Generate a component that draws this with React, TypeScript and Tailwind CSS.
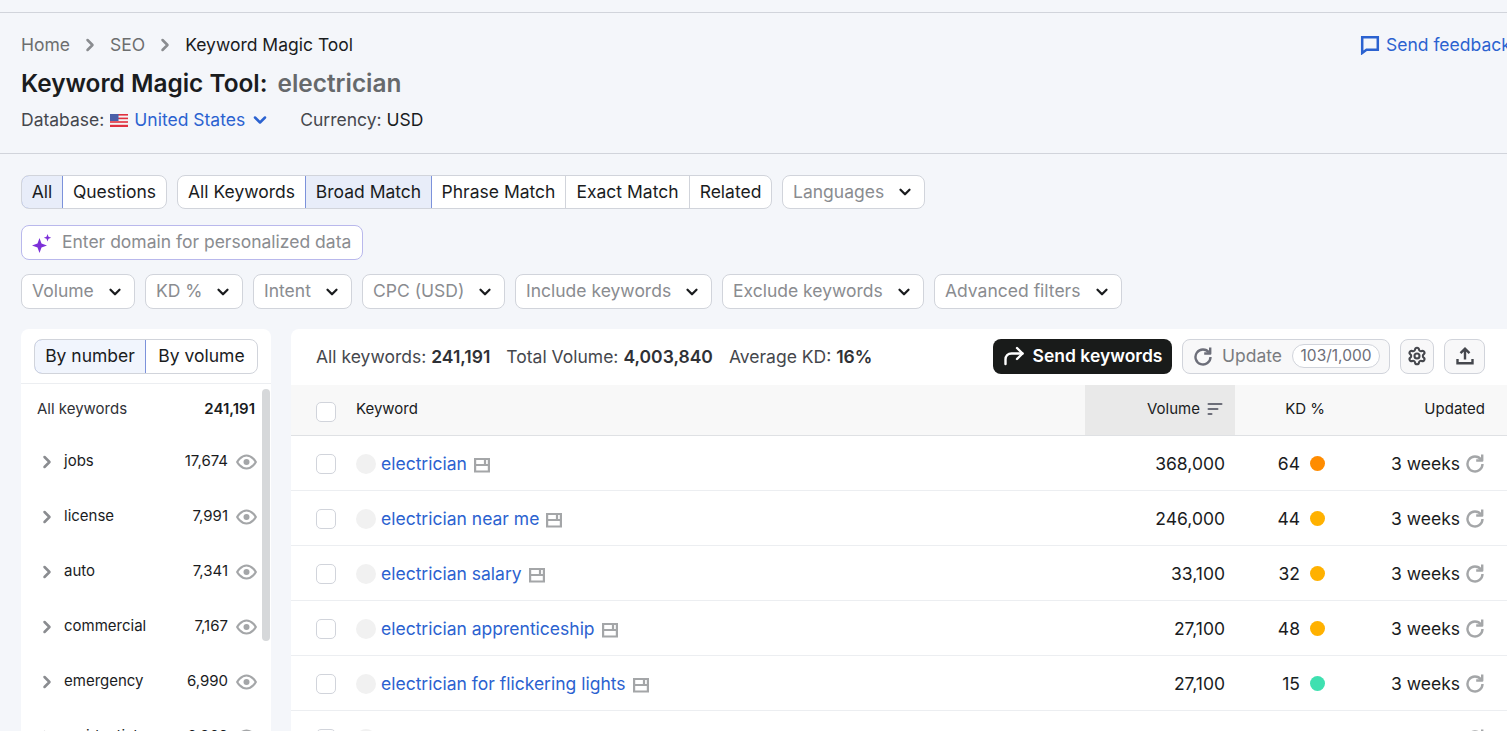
import { ChevronRight, ChevronDown, Settings } from 'lucide-react';

const filters = [
    { label: 'Volume', width: 'w-[114px]' },
    { label: 'KD %', width: 'w-[98px]' },
    { label: 'Intent', width: 'w-[99px]' },
    { label: 'CPC (USD)', width: 'w-[143px]' },
    { label: 'Include keywords', width: 'w-[197px]' },
    { label: 'Exclude keywords', width: 'w-[202px]' },
    { label: 'Advanced filters', width: 'w-[188px]' },
];

const groups = [
    { name: 'jobs', count: '17,674' },
    { name: 'license', count: '7,991' },
    { name: 'auto', count: '7,341' },
    { name: 'commercial', count: '7,167' },
    { name: 'emergency', count: '6,990' },
    { name: 'residential', count: '6,869' },
];

const rows = [
    { keyword: 'electrician', volume: '368,000', kd: '64', dot: 'bg-[#ff8c00]' },
    { keyword: 'electrician near me', volume: '246,000', kd: '44', dot: 'bg-[#ffb100]' },
    { keyword: 'electrician salary', volume: '33,100', kd: '32', dot: 'bg-[#ffb100]' },
    { keyword: 'electrician apprenticeship', volume: '27,100', kd: '48', dot: 'bg-[#ffb100]' },
    { keyword: 'electrician for flickering lights', volume: '27,100', kd: '15', dot: 'bg-[#3fe0b0]' },
    { keyword: 'electrician school', volume: '22,200', kd: '40', dot: 'bg-[#ffb100]' },
];

const SerpIcon = () => (
    <svg width="16" height="16" viewBox="0 0 16 16" fill="none" stroke="currentColor" strokeWidth="2.2" className="mt-[2px] shrink-0 text-[#a4a6a8]">
        <path d="M1.1 2h13.8v12.5H1.1zM1.1 8h13.8M11 2v6" />
    </svg>
);

const RefreshIcon = ({ className }: { className: string }) => (
    <svg viewBox="0 0 20 20" fill="none" stroke="currentColor" strokeWidth="2.4" className={className}>
        <path d="M16 6.5A7.5 7.5 0 1 0 17.5 11" />
        <path d="M17.2 1.5v6h-6" strokeLinejoin="round" />
    </svg>
);

const EyeIcon = () => (
    <svg width="21" height="16" viewBox="0 0 21 16" fill="none" className="ml-[8px] shrink-0 text-[#a4a6a8]">
        <path d="M1.2 8s3.4-6.5 9.3-6.5S19.8 8 19.8 8s-3.4 6.5-9.3 6.5S1.2 8 1.2 8z" stroke="currentColor" strokeWidth="2.2" />
        <circle cx="10.5" cy="8" r="3" fill="currentColor" />
    </svg>
);

const UploadIcon = () => (
    <svg width="20" height="20" viewBox="0 0 20 20" fill="none" stroke="currentColor" strokeWidth="2.4" className="text-[#45474d]">
        <path d="M10 13.5V3M5.5 7.2 10 2.8l4.5 4.4M2.5 13v4.2h15V13" />
    </svg>
);

const SendIcon = () => (
    <svg width="22" height="22" viewBox="0 0 22 22" fill="none" stroke="currentColor" strokeWidth="2.4" strokeLinecap="round" strokeLinejoin="round" className="shrink-0">
        <path d="M2.5 19v-4.5c0-3.5 2.5-6 6-6h11" />
        <path d="M14 3l5.5 5.5L14 14" />
    </svg>
);

const Flag = () => (
    <svg width="18" height="13" viewBox="0 0 18 13" className="shrink-0">
        <rect width="18" height="13" fill="#f4f4f4" />
        <rect y="0" width="18" height="1.6" fill="#e0313f" />
        <rect y="3.6" width="18" height="1.6" fill="#e0313f" />
        <rect y="7.2" width="18" height="1.6" fill="#e0313f" />
        <rect y="10.8" width="18" height="2.2" fill="#e0313f" />
        <rect width="8.5" height="7" fill="#4a5fa8" />
    </svg>
);

const Sparkle = () => (
    <svg width="20" height="20" viewBox="0 0 20 20" className="shrink-0 text-[#7c2fd8]">
        <path fill="currentColor" d="M7.5 5l2 5.5 5.5 2-5.5 2-2 5.5-2-5.5-5.5-2 5.5-2zM15.5 1l1 2.7 2.7 1-2.7 1-1 2.7-1-2.7-2.7-1 2.7-1z" />
    </svg>
);

const FeedbackIcon = () => (
    <svg width="20" height="20" viewBox="0 0 20 20" fill="none" stroke="currentColor" strokeWidth="2.5" className="shrink-0">
        <path d="M2.2 2.2h15.6v12.6H6.5L2.2 18z" />
    </svg>
);

const SortIcon = () => (
    <svg width="16" height="14" viewBox="0 0 16 14" className="shrink-0 text-[#6c6e79]">
        <rect x="0.5" y="1" width="15" height="2" rx="1" fill="currentColor" />
        <rect x="0.5" y="6" width="11" height="2" rx="1" fill="currentColor" />
        <rect x="0.5" y="11" width="5" height="2" rx="1" fill="currentColor" />
    </svg>
);

const App = () => {
    return (
        <div className="h-[731px] w-[1507px] overflow-hidden bg-[#f4f6fa] font-['Inter',sans-serif] text-[#1a1c1e]">
            <div className="pt-3">
                <div className="h-px bg-[#d1d4db]" />
            </div>

            {/* Header */}
            <div className="h-[141px] border-b border-[#d1d4db] pl-[21px] pt-[16px]">
                <div className="flex h-[32px] items-center justify-between text-[17.5px]">
                    <div className="flex items-center text-[#6c6e6f]">
                        <span>Home</span>
                        <ChevronRight className="mx-[10px] h-[20px] w-[20px] text-[#8a8c90]" strokeWidth={3} />
                        <span>SEO</span>
                        <ChevronRight className="mx-[10px] h-[20px] w-[20px] text-[#8a8c90]" strokeWidth={3} />
                        <span className="text-[#1a1c1e]">Keyword Magic Tool</span>
                    </div>
                    <div className="flex w-[147px] shrink-0 items-center gap-[6px] overflow-hidden whitespace-nowrap text-[#2b62d0]">
                        <FeedbackIcon />
                        <span>Send feedback</span>
                    </div>
                </div>
                <div className="mt-[5px] flex items-center gap-[10px] text-[24.4px] font-semibold leading-[34px]">
                    <span>Keyword Magic Tool:</span>
                    <span className="text-[#66696c]">electrician</span>
                </div>
                <div className="mt-[8px] flex items-center text-[17.5px] leading-[24px]">
                    <span className="text-[#45474d]">Database:</span>
                    <span className="ml-[6px]"><Flag /></span>
                    <span className="ml-[6px] text-[#2b62d0]">United States</span>
                    <ChevronDown className="ml-[5px] h-[20px] w-[20px] text-[#2b62d0]" strokeWidth={3} />
                    <span className="ml-[30px] text-[#45474d]">Currency:</span>
                    <span className="ml-[5px]">USD</span>
                </div>
            </div>

            {/* Filters */}
            <div className="px-[21px] pt-[21px] text-[17.5px]">
                <div className="flex h-[34px] items-center">
                    <div className="flex h-[34px] overflow-hidden rounded-[8px] border border-[#d1d4db] bg-white">
                        <span className="-my-px -ml-px flex w-[42px] items-center justify-center rounded-l-[8px] border border-[#7c92db] bg-[#e8edf9]">All</span>
                        <span className="flex w-[103px] items-center justify-center">Questions</span>
                    </div>
                    <div className="ml-[10px] flex h-[34px] overflow-hidden rounded-[8px] border border-[#d1d4db] bg-white">
                        <span className="flex w-[127px] items-center justify-center">All Keywords</span>
                        <span className="-my-px flex w-[127px] items-center justify-center border border-[#7c92db] bg-[#e8edf9]">Broad Match</span>
                        <span className="flex w-[134px] items-center justify-center border-r border-[#d1d4db]">Phrase Match</span>
                        <span className="flex w-[124px] items-center justify-center border-r border-[#d1d4db]">Exact Match</span>
                        <span className="flex w-[81px] items-center justify-center">Related</span>
                    </div>
                    <div className="ml-[10px] flex h-[34px] w-[143px] items-center justify-between rounded-[8px] border border-[#d1d4db] bg-white px-[10px] text-[#8a8c90]">
                        <span>Languages</span>
                        <ChevronDown className="h-[18px] w-[18px] text-[#1a1c1e]" strokeWidth={3} />
                    </div>
                </div>

                <div className="mt-[16px] flex h-[35px] w-[342px] items-center gap-[10px] rounded-[8px] border border-[#b9b8ec] bg-white pl-[10px] text-[#8a8c90]">
                    <Sparkle />
                    <span>Enter domain for personalized data</span>
                </div>

                <div className="mt-[14px] flex h-[35px] gap-[10px]">
                    {filters.map((f) => (
                        <div key={f.label} className={`flex ${f.width} items-center justify-between rounded-[8px] border border-[#d1d4db] bg-white px-[10px] text-[#8a8c90]`}>
                            <span>{f.label}</span>
                            <ChevronDown className="h-[18px] w-[18px] text-[#1a1c1e]" strokeWidth={3} />
                        </div>
                    ))}
                </div>
            </div>

            {/* Panels */}
            <div className="mt-[20px] flex gap-[20px] pl-[21px]">
                <div className="h-[420px] w-[250px] shrink-0 rounded-t-[8px] bg-white">
                    <div className="flex h-[55px] items-center border-b border-[#eceef1] px-[13px]">
                        <div className="flex h-[35px] w-[224px] overflow-hidden rounded-[8px] border border-[#d1d4db] text-[17.5px]">
                            <span className="-my-px -ml-px flex w-[112px] items-center justify-center rounded-l-[8px] border border-[#7c92db] bg-[#f1f5fd]">By number</span>
                            <span className="flex flex-1 items-center justify-center">By volume</span>
                        </div>
                    </div>
                    <div className="flex">
                        <div className="w-[241px] shrink-0 text-[15px]">
                            <div className="flex h-[50px] items-center justify-between pl-[16px] pr-[7px]">
                                <span className="text-[#2f3136]">All keywords</span>
                                <span className="font-semibold">241,191</span>
                            </div>
                            {groups.map((g) => (
                                <div key={g.name} className="flex h-[55px] items-center pl-[16px] pr-[5px]">
                                    <ChevronRight className="h-[20px] w-[20px] text-[#8a8c90]" strokeWidth={3} />
                                    <span className="ml-[7px] flex-1">{g.name}</span>
                                    <span>{g.count}</span>
                                    <EyeIcon />
                                </div>
                            ))}
                        </div>
                        <div className="mt-[5px] h-[252px] w-[8px] rounded-full bg-[#d6d8da]" />
                    </div>
                </div>

                <div className="h-[420px] flex-1 rounded-tl-[8px] bg-white">
                    <div className="flex h-[56px] items-center pl-[25px] pr-[22px] text-[17.5px]">
                        <span className="text-[#45474d]">All keywords:</span>
                        <span className="ml-[5px] font-semibold text-[#2f3136]">241,191</span>
                        <span className="ml-[16px] text-[#45474d]">Total Volume:</span>
                        <span className="ml-[5px] font-semibold text-[#2f3136]">4,003,840</span>
                        <span className="ml-[16px] text-[#45474d]">Average KD:</span>
                        <span className="ml-[5px] font-semibold text-[#2f3136]">16%</span>
                        <div className="-mt-[2px] ml-auto flex items-center">
                            <div className="flex h-[35px] w-[179px] items-center justify-center gap-[8px] rounded-[8px] bg-[#191b1a] font-semibold text-white">
                                <SendIcon />
                                <span>Send keywords</span>
                            </div>
                            <div className="ml-[10px] flex h-[35px] w-[208px] items-center rounded-[8px] border border-[#d1d4db] bg-[#f8f8f9] pl-[10px] text-[#7a7c80]">
                                <RefreshIcon className="h-[20px] w-[20px] text-[#6c6e79]" />
                                <span className="ml-[9px]">Update</span>
                                <span className="ml-[10px] flex h-[24px] w-[88px] items-center justify-center rounded-full border border-[#d1d4db] bg-white text-[15.5px] text-[#6c6e79]">103/1,000</span>
                            </div>
                            <div className="ml-[10px] flex h-[35px] w-[34px] items-center justify-center rounded-[8px] border border-[#d1d4db] bg-[#f8f8f9]">
                                <Settings className="h-[20px] w-[20px] text-[#45474d]" strokeWidth={2.5} />
                            </div>
                            <div className="ml-[10px] flex h-[35px] w-[41px] items-center justify-center rounded-[8px] border border-[#d1d4db] bg-[#f8f8f9]">
                                <UploadIcon />
                            </div>
                        </div>
                    </div>

                    {/* Table head */}
                    <div className="flex h-[51px] items-center border-b border-[#dfe1e4] bg-[#f8f8f8] pb-[2px] text-[15px]">
                        <span className="ml-[25px] mt-[6px] h-[20px] w-[20px] rounded-[5px] border border-[#d1d4db] bg-white" />
                        <span className="ml-[20px] flex-1">Keyword</span>
                        <div className="-mb-[2px] flex h-[50px] w-[150px] items-center justify-end gap-[7px] bg-[#e9e9e9] pb-[2px] pr-[12px]">
                            <span>Volume</span>
                            <SortIcon />
                        </div>
                        <span className="w-[90px] text-right">KD %</span>
                        <span className="w-[182px] pr-[22px] text-right">Updated</span>
                    </div>

                    {rows.map((r) => (
                        <div key={r.keyword} className="flex h-[55px] items-center border-b border-[#eceef1] pt-[2px] text-[17.5px]">
                            <span className="ml-[25px] h-[20px] w-[20px] rounded-[5px] border border-[#d1d4db] bg-white" />
                            <span className="ml-[20px] h-[20px] w-[20px] rounded-full bg-[#f1f1f1]" />
                            <div className="ml-[5px] flex flex-1 items-center gap-[7px] text-[#2b62d0]">
                                <span>{r.keyword}</span>
                                <SerpIcon />
                            </div>
                            <span className="w-[150px] pr-[10px] text-right">{r.volume}</span>
                            <div className="flex w-[90px] items-center justify-end">
                                <span>{r.kd}</span>
                                <span className={`-mt-[1px] ml-[10px] h-[15px] w-[15px] rounded-full ${r.dot}`} />
                            </div>
                            <div className="flex w-[182px] items-center justify-end pr-[22px]">
                                <span>3 weeks</span>
                                <RefreshIcon className="-mt-[2px] ml-[5px] h-[20px] w-[20px] text-[#a4a6a8]" />
                            </div>
                        </div>
                    ))}
                </div>
            </div>
        </div>
    );
};

export default App;
